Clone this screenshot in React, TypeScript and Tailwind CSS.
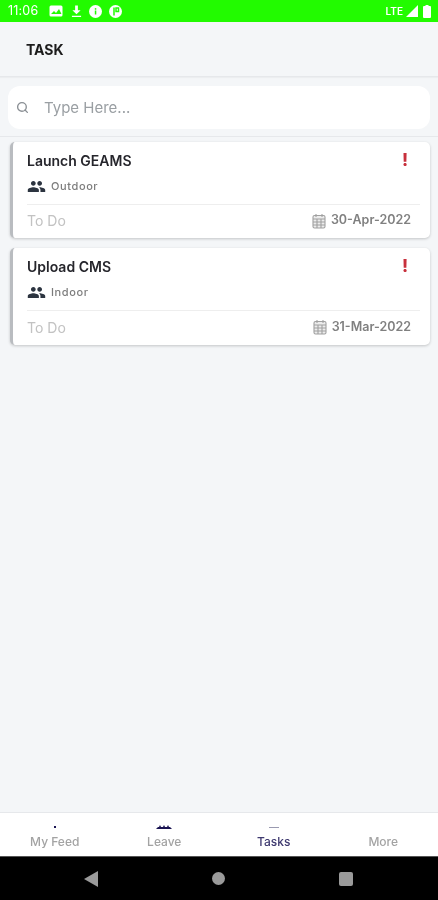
import { Search } from "lucide-react";
import { MdPeople } from "react-icons/md";

const tasks = [
  { title: "Launch GEAMS", kind: "Outdoor", status: "To Do", due: "30-Apr-2022", height: "h-[96px]" },
  { title: "Upload CMS", kind: "Indoor", status: "To Do", due: "31-Mar-2022", height: "h-[97px]" },
];

const tabs = [
  { label: "My Feed", color: "text-[#a3a3a3]", mark: <div className="h-[2px] w-[2px] bg-[#1a1452]" /> },
  {
    label: "Leave",
    color: "text-[#a3a3a3]",
    mark: (
      <svg width="16" height="4" viewBox="0 0 16 4" fill="#1a1452">
        <path d="M0 4l2-2h1l1-2 1 2h2l1-2 1 2h2l1-2 1 2h1l2 2z" />
      </svg>
    ),
  },
  { label: "Tasks", color: "text-[#3f3a70]", mark: <div className="h-[1px] w-[10px] bg-[#9a9ab0]" /> },
  { label: "More", color: "text-[#a3a3a3]", mark: null },
];

const CalendarIcon = () => (
  <svg width="14" height="16" viewBox="0 0 14 16" fill="none" stroke="#a0a0a0" strokeWidth="1.1">
    <rect x="1" y="2.5" width="12" height="12.5" rx="1.5" fill="#ececec" />
    <path d="M1 6h12M1 9h12M1 12h12M5 6v9M9 6v9M4 1v3M10 1v3" />
  </svg>
);

const StatusBar = () => (
  <div className="h-[22px] shrink-0 bg-[#22fb00] flex items-center justify-between pl-[8px] pr-[7px] text-white">
    <div className="flex items-center">
      <span className="text-[12.5px] tracking-[0.2px]">11:06</span>
      <svg className="ml-[11px]" width="14" height="12" viewBox="0 0 14 12" fill="white">
        <rect x="0.5" y="0.5" width="13" height="11" rx="1.5" />
        <path d="M2 9l3-3 2 2 3-4 2.500 5z" fill="#22fb00" />
      </svg>
      <svg className="ml-[8px]" width="11" height="13" viewBox="0 0 12 13" fill="white">
        <path d="M4.500 0h3v5h3L6 9.500 1.500 5h3zM1 11h10v1.500H1z" />
      </svg>
      <svg className="ml-[7px]" width="13" height="13" viewBox="0 0 13 13">
        <circle cx="6.500" cy="6.500" r="6.500" fill="white" />
        <rect x="5.800" y="5.500" width="1.500" height="4" fill="#22fb00" />
        <rect x="5.800" y="3.200" width="1.500" height="1.500" fill="#22fb00" />
      </svg>
      <svg className="ml-[7px]" width="13" height="13" viewBox="0 0 13 13">
        <circle cx="6.500" cy="6.500" r="6.500" fill="white" />
        <path d="M5 2.500v8M7 3h2.500v3.500H7z" stroke="#22fb00" strokeWidth="1.500" fill="none" />
      </svg>
    </div>
    <div className="flex items-center">
      <span className="text-[10px] font-semibold leading-none">LTE</span>
      <svg className="ml-[3px]" width="12" height="12" viewBox="0 0 12 12" fill="white">
        <path d="M12 0v12H0z" />
      </svg>
      <svg className="ml-[5px]" width="8" height="13" viewBox="0 0 8 13" fill="white">
        <path d="M2.500 0h3v1H7a1 1 0 0 1 1 1v10a1 1 0 0 1-1 1H1a1 1 0 0 1-1-1V2a1 1 0 0 1 1-1h1.500z" />
      </svg>
    </div>
  </div>
);

const TaskCard = ({ task }: { task: (typeof tasks)[number] }) => (
  <div className={`${task.height} bg-white rounded-[5px] border-l-[3px] border-[#b9bcc0] shadow-[0_1px_3px_rgba(0,0,0,0.2)] pl-[14px] pr-[10px] flex flex-col`}>
    <div className="flex items-center justify-between h-[36px]">
      <span className="text-[14px] font-semibold text-[#26262c]">{task.title}</span>
      <span className="text-[17px] font-extrabold text-[#c8303c] pr-[12px] leading-none">!</span>
    </div>
    <div className="flex items-center h-[17px] gap-[5px]">
      <MdPeople className="w-[19px] h-[19px] text-[#2c3440]" />
      <span className="text-[11px] font-medium text-[#7c7c7c] tracking-[0.6px]">{task.kind}</span>
    </div>
    <div className="mt-[9px] border-t border-[#eeeeee] flex-1 flex items-center justify-between pb-[2px]">
      <span className="text-[14px] text-[#c2c2c2]">{task.status}</span>
      <span className="flex items-center gap-[5px] pr-[9px] text-[12.5px] font-semibold text-[#808080]">
        <CalendarIcon />
        {task.due}
      </span>
    </div>
  </div>
);

export default function App() {
  return (
    <div className="h-[900px] w-[438px] flex flex-col bg-[#f4f6f8] font-['Inter',sans-serif] overflow-hidden blur-[0.4px]">
      <StatusBar />

      <div className="h-[55px] shrink-0 flex items-center pl-[26px] pt-[1px] border-b border-[#e6e8eb] shadow-[0_1px_1px_rgba(0,0,0,0.03)]">
        <span className="text-[14px] font-bold text-[#1c1c1c]">TASK</span>
      </div>

      <div className="h-[60px] shrink-0 px-[8px] pt-[9px] border-b border-[#e6e8eb]">
        <div className="h-[43px] bg-white rounded-[12px] flex items-center pl-[8px]">
          <Search className="w-[13px] h-[13px] text-[#8a8f94]" strokeWidth={2.500} />
          <span className="ml-[15px] pt-[2px] text-[15px] text-[#9a9fa3]">Type Here...</span>
        </div>
      </div>

      <div className="flex-1 flex flex-col gap-[10px] pl-[10px] pr-[8px] pt-[5px]">
        {tasks.map((task) => (
          <TaskCard key={task.title} task={task} />
        ))}
      </div>

      <div className="h-[44px] shrink-0 bg-white border-t border-[#e6e8eb] grid grid-cols-4">
        {tabs.map((tab) => (
          <div key={tab.label} className="flex flex-col items-center pt-[12px]">
            <div className="h-[4px] flex items-center">{tab.mark}</div>
            <span className={`mt-[5px] text-[12px] font-medium leading-[16px] ${tab.color}`}>{tab.label}</span>
          </div>
        ))}
      </div>

      <div className="h-[44px] shrink-0 bg-black flex items-center border-t border-[#555555]">
        <div className="w-[438px] flex items-center justify-between pl-[84px] pr-[85px]">
          <svg width="14" height="16" viewBox="0 0 14 16" fill="#9a9a9a">
            <path d="M14 0v16L0 8z" />
          </svg>
          <div className="w-[13px] h-[13px] rounded-full bg-[#9a9a9a]" />
          <div className="w-[14px] h-[14px] rounded-[2px] bg-[#9a9a9a]" />
        </div>
      </div>
    </div>
  );
}
